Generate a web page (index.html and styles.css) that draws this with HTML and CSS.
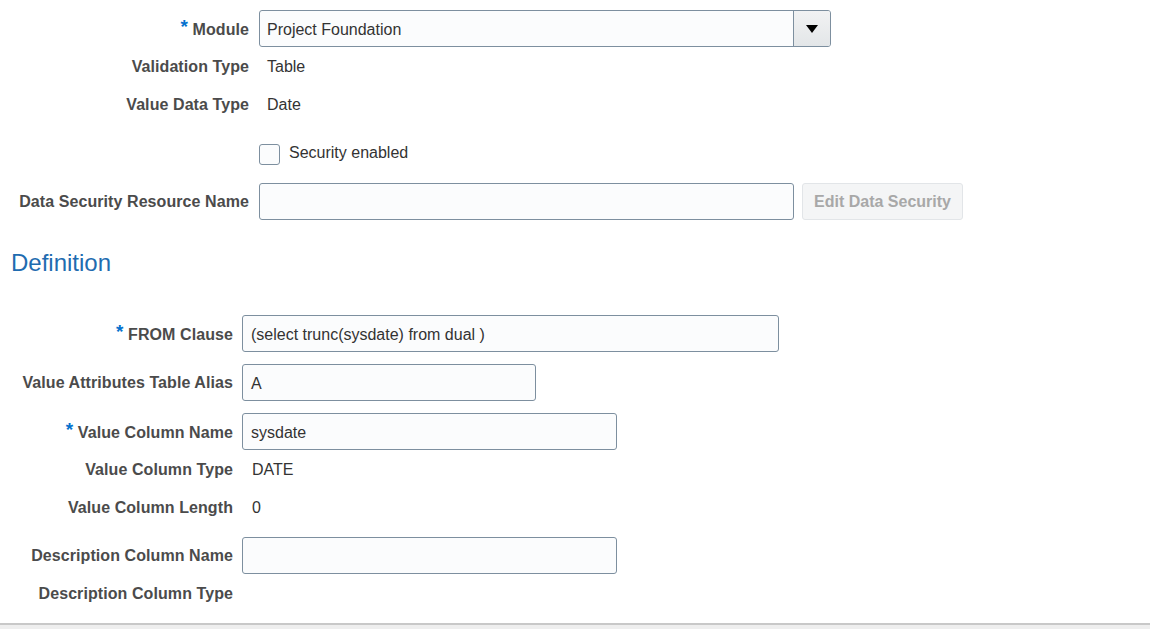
FILE: index.html
```html
<!DOCTYPE html>
<html>
<head>
<meta charset="utf-8">
<link rel="stylesheet" href="styles.css">
</head>
<body>
<div class="page">
  <div class="form form-top">
    <div class="row r-module">
      <div class="label"><span class="req">*</span> Module</div>
      <div class="select">
        <div class="select-text">Project Foundation</div>
        <div class="select-btn"><svg width="12" height="8" viewBox="0 0 12 8"><path d="M0 0H12L6 8Z" fill="#000"/></svg></div>
      </div>
    </div>
    <div class="row r-text">
      <div class="label">Validation Type</div>
      <div class="value">Table</div>
    </div>
    <div class="row r-text">
      <div class="label">Value Data Type</div>
      <div class="value">Date</div>
    </div>
    <div class="row r-check">
      <div class="label"></div>
      <div class="check-wrap"><span class="checkbox"></span><span class="check-label">Security enabled</span></div>
    </div>
    <div class="row r-input">
      <div class="label">Data Security Resource Name</div>
      <div class="field-group">
        <div class="input w-dsr"></div>
        <button class="btn-disabled">Edit Data Security</button>
      </div>
    </div>
  </div>

  <h2 class="section-title">Definition</h2>

  <div class="form form-def">
    <div class="row r-input">
      <div class="label"><span class="req">*</span> FROM Clause</div>
      <div class="input w-from">(select trunc(sysdate) from dual )</div>
    </div>
    <div class="row r-input gap12">
      <div class="label">Value Attributes Table Alias</div>
      <div class="input w-alias">A</div>
    </div>
    <div class="row r-input gap12">
      <div class="label"><span class="req">*</span> Value Column Name</div>
      <div class="input w-vcn">sysdate</div>
    </div>
    <div class="row r-text">
      <div class="label">Value Column Type</div>
      <div class="value">DATE</div>
    </div>
    <div class="row r-text">
      <div class="label">Value Column Length</div>
      <div class="value">0</div>
    </div>
    <div class="row r-input gap11">
      <div class="label">Description Column Name</div>
      <div class="input w-vcn"></div>
    </div>
    <div class="row r-text">
      <div class="label">Description Column Type</div>
      <div class="value"></div>
    </div>
  </div>
</div>
<div class="footer-bar"></div>
</body>
</html>
```
FILE: styles.css
```css
html, body {
  margin: 0;
  padding: 0;
  background: #ffffff;
}
body {
  font-family: "Liberation Sans", Arial, sans-serif;
  font-size: 16px;
  color: #333333;
  width: 1150px;
  height: 629px;
  overflow: hidden;
  display: flex;
  flex-direction: column;
}
.page {
  height: 623px;
  flex: none;
  display: flex;
  flex-direction: column;
}
.form {
  display: flex;
  flex-direction: column;
}
.form-top {
  padding-top: 10px;
}
.row {
  display: flex;
  align-items: center;
}
.form-top .label {
  width: 249px;
  margin-right: 10px;
}
.form-def .label {
  width: 233px;
  margin-right: 9px;
}
.label {
  flex: none;
  text-align: right;
  font-weight: bold;
  color: #4b4b4b;
  white-space: nowrap;
  letter-spacing: 0.08px;
}
.r-text .label,
.r-text .value {
  position: relative;
  top: 1px;
}
.req {
  color: #0572ce;
  font-size: 19px;
  position: relative;
  top: -2px;
}
.r-module, .r-input {
  height: 37px;
}
.r-text {
  height: 38px;
}
.r-check {
  height: 60px;
}
.gap12 { margin-top: 12px; }
.gap11 { margin-top: 11px; }
.value {
  padding-left: 8px;
  color: #333333;
}
.form-def .value {
  padding-left: 10px;
}
.select {
  width: 572px;
  height: 37px;
  box-sizing: border-box;
  border: 1px solid #7d8f9f;
  border-radius: 3px;
  background: #fbfcfd;
  display: flex;
  align-items: stretch;
}
.select-text {
  flex: 1;
  display: flex;
  align-items: center;
  padding-left: 7px;
  padding-top: 2px;
  color: #333333;
}
.select-btn {
  width: 36px;
  border-left: 1px solid #7d8f9f;
  background: linear-gradient(#f1f2f3, #e3e6e8);
  border-radius: 0 2px 2px 0;
  display: flex;
  align-items: center;
  justify-content: center;
}
.check-wrap {
  display: flex;
  align-items: center;
  padding-top: 2px;
}
.checkbox {
  width: 21px;
  height: 21px;
  box-sizing: border-box;
  border: 1px solid #7d8f9f;
  border-radius: 3px;
  background: #fbfcfd;
  margin-right: 9px;
}
.check-label {
  color: #333333;
  position: relative;
  top: -1px;
}
.field-group {
  display: flex;
  align-items: center;
  gap: 8px;
}
.input {
  height: 37px;
  box-sizing: border-box;
  border: 1px solid #7d8f9f;
  border-radius: 3px;
  background: #fbfcfd;
  padding-left: 8px;
  padding-top: 3px;
  display: flex;
  align-items: center;
  color: #333333;
}
.w-dsr { width: 535px; }
.w-from { width: 537px; }
.w-alias { width: 294px; }
.w-vcn { width: 375px; }
.btn-disabled {
  width: 161px;
  height: 37px;
  box-sizing: border-box;
  border: 1px solid #e2e5e8;
  border-radius: 3px;
  background: #f4f5f6;
  color: #a8a8a8;
  font-family: "Liberation Sans", Arial, sans-serif;
  font-size: 16px;
  font-weight: bold;
  padding: 0;
}
.section-title {
  margin: 0;
  padding: 29px 0 0 11px;
  height: 95px;
  flex: none;
  box-sizing: border-box;
  font-size: 24px;
  font-weight: normal;
  color: #1f6cb0;
  line-height: 28px;
}
.footer-bar {
  height: 6px;
  flex: none;
  border-top: 2px solid #c8c8c8;
  background: #eeeeee;
  box-sizing: border-box;
}
```
